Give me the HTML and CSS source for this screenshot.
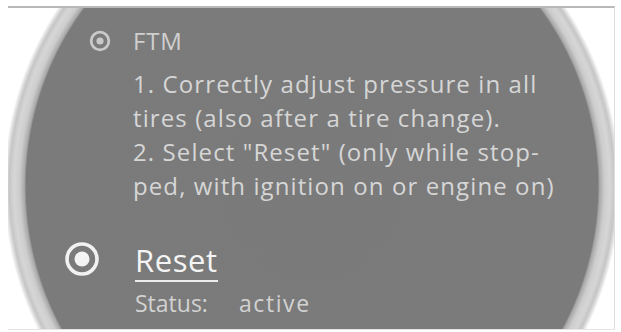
FILE: index.html
```html
<!DOCTYPE html>
<html lang="en">
<head>
<meta charset="utf-8">
<title>FTM Reset</title>
<link rel="stylesheet" href="styles.css">
</head>
<body>
<div class="frame">
  <div class="option option-ftm">
    <span class="radio radio-small">
      <svg viewBox="0 0 22 22" width="22" height="22"><circle cx="11" cy="11" r="8.8" fill="none" stroke="#c9c9c9" stroke-width="2.8"/><circle cx="11" cy="11" r="3.6" fill="#c9c9c9"/></svg>
    </span>
    <span class="option-label">FTM</span>
  </div>
  <div class="description">
    <p class="line">1. Correctly adjust pressure in all</p>
    <p class="line">tires (also after a tire change).</p>
    <p class="line">2. Select "Reset" (only while stop-</p>
    <p class="line">ped, with ignition on or engine on)</p>
  </div>
  <div class="option option-reset">
    <span class="radio radio-large">
      <svg viewBox="0 0 36 36" width="36" height="36"><circle cx="18" cy="18" r="15" fill="none" stroke="#f2f2f2" stroke-width="3.6"/><circle cx="18" cy="18" r="7.5" fill="#f4f4f4"/></svg>
    </span>
    <span class="reset-label">Reset</span>
  </div>
  <div class="status">
    <span class="status-key">Status:</span><span class="status-value">active</span>
  </div>
</div>
</body>
</html>
```

FILE: styles.css
```css
html, body {
  margin: 0;
  padding: 0;
  background: #ffffff;
}

.frame {
  margin: 6px 0 0 8px;
  width: 607px;
  height: 324px;
  box-sizing: border-box;
  border-top: 2px solid #b9b9b9;
  border-right: 1px solid #dedede;
  border-bottom: 1px solid #e4e4e4;
  overflow: hidden;
  font-family: "Open Sans", "Noto Sans", sans-serif;
  color: #d6d6d6;
  background:
    radial-gradient(ellipse 308px 316px at 304px 178px,
      #7a7a7a 0%,
      #7b7b7b 92.8%,
      #a9a9a9 93.4%,
      #cdcdcd 95%,
      #d6d6d6 96.8%,
      #c6c6c6 98.3%,
      #e9e9e9 99.4%,
      #ffffff 100%);
}

.option {
  display: flex;
  align-items: center;
}

.option-ftm {
  margin-top: 16px;
  height: 34px;
}

.radio {
  display: flex;
  align-items: center;
  justify-content: center;
}

.radio-small {
  width: 22px;
  margin-left: 81px;
  margin-right: 22px;
}

.option-label {
  font-size: 24px;
  line-height: 34px;
  letter-spacing: 0.8px;
  color: #cfcfcf;
}

.description {
  margin-top: 9px;
  padding-left: 125px;
}

.line {
  margin: 0;
  font-size: 24px;
  line-height: 34px;
  letter-spacing: 1.1px;
  white-space: nowrap;
}

.option-reset {
  margin-top: 36px;
  height: 40px;
}

.radio-large {
  width: 36px;
  margin-left: 56px;
  margin-right: 35px;
}

.reset-label {
  font-size: 31px;
  line-height: 40px;
  letter-spacing: 0.6px;
  color: #f4f4f4;
  border-bottom: 2px solid #ececec;
  margin-top: 4px;
}

.status {
  margin-top: 7px;
  padding-left: 127px;
  font-size: 23px;
  line-height: 34px;
  color: #d2d2d2;
  white-space: nowrap;
}

.status-value {
  margin-left: 31px;
  letter-spacing: 1.6px;
}
```
